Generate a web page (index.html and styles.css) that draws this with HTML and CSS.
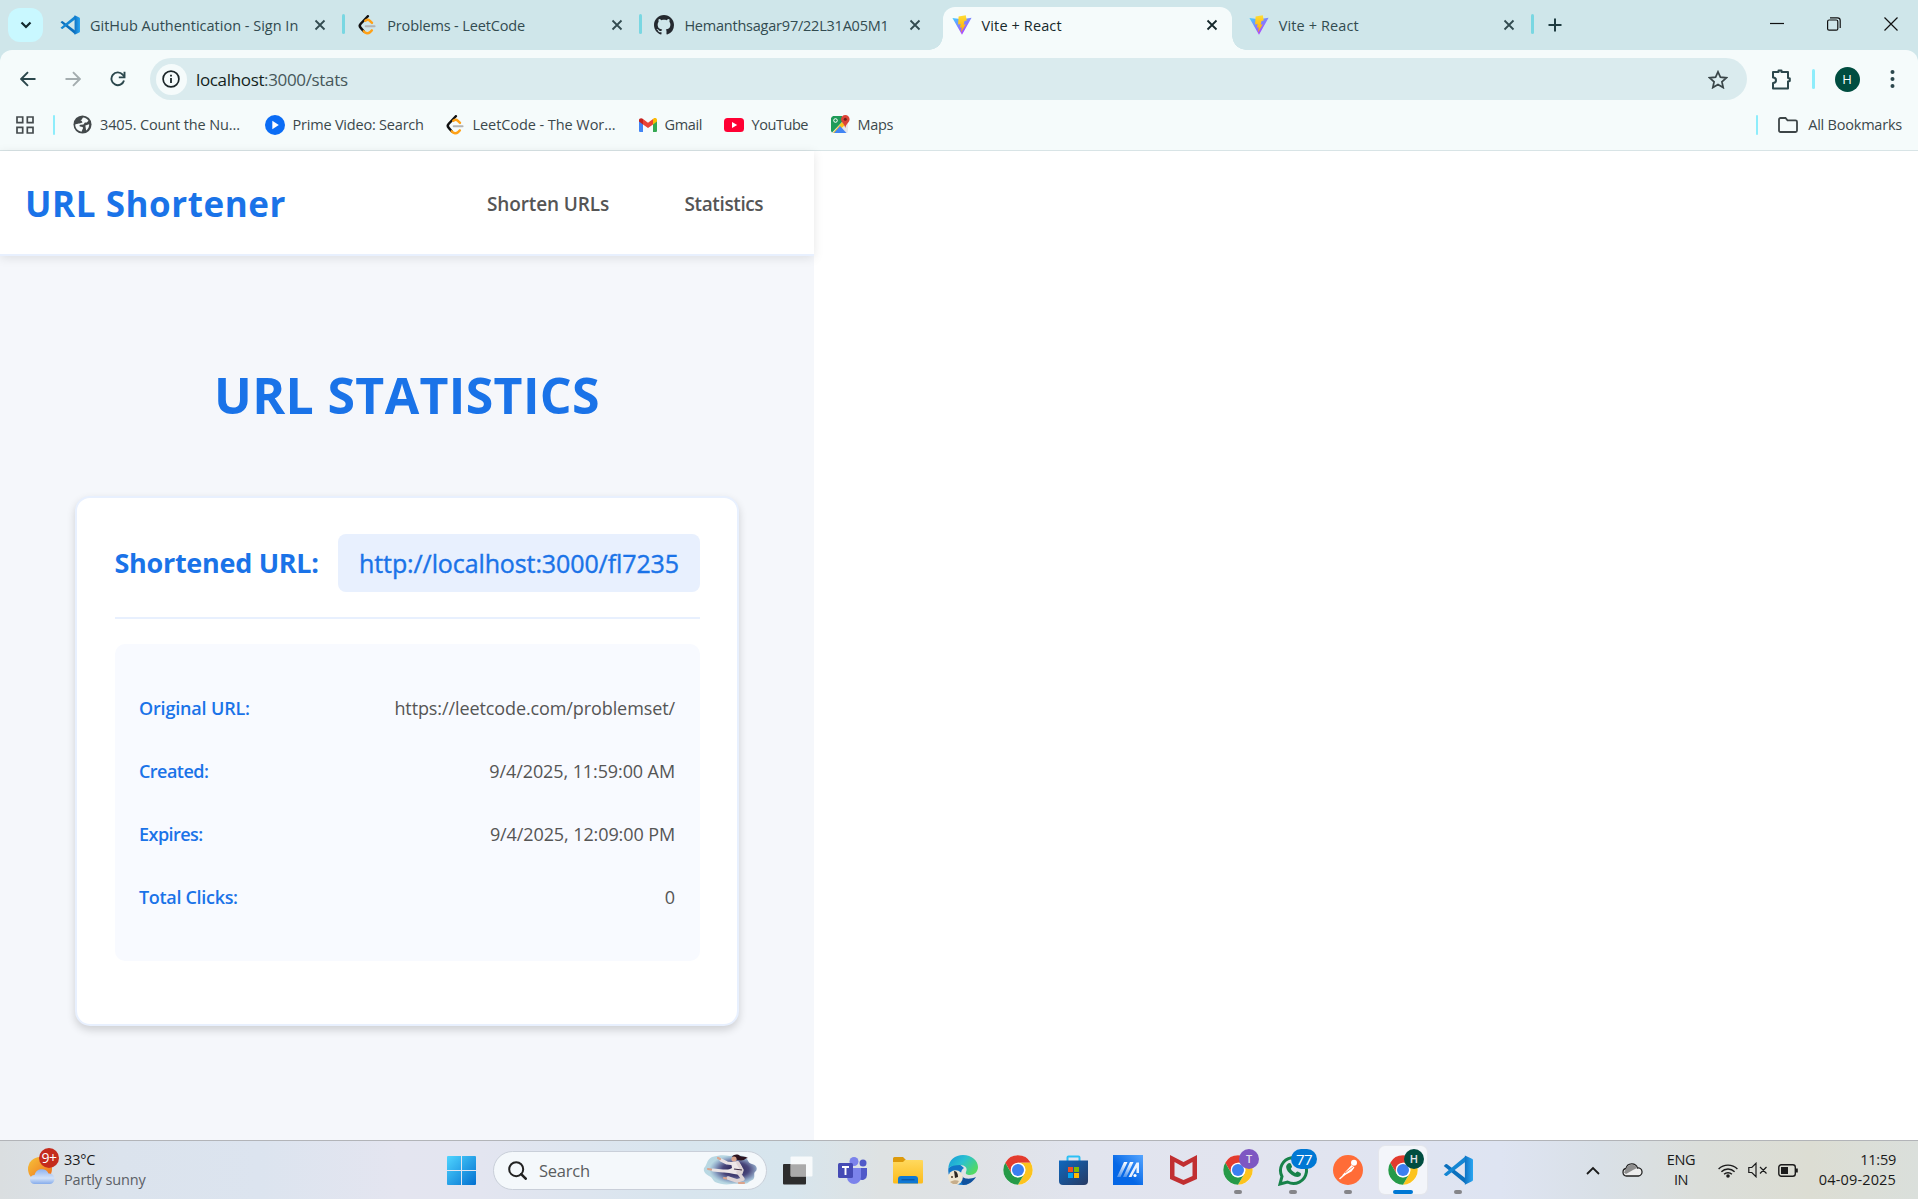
FILE: index.html
```html
<!DOCTYPE html>
<html lang="en">
<head>
<meta charset="utf-8">
<title>Vite + React</title>
<link rel="stylesheet" href="styles.css">
</head>
<body>
<svg class="defs" width="0" height="0" aria-hidden="true">
  <defs>
    <linearGradient id="g-vs" x1="0" x2="1"><stop offset="0" stop-color="#0f73c4"/><stop offset="1" stop-color="#2aa6f2"/></linearGradient>
    <linearGradient id="g-vite" x1="0" y1="0" x2=".7" y2="1"><stop offset="0" stop-color="#41d1ff"/><stop offset="1" stop-color="#bd34fe"/></linearGradient>
    <linearGradient id="g-bolt" x1="0" y1="0" x2="0" y2="1"><stop offset="0" stop-color="#ffdd35"/><stop offset="1" stop-color="#ffa800"/></linearGradient>
    <linearGradient id="g-win" x1="0" y1="0" x2="1" y2="1"><stop offset="0" stop-color="#4fd5ff"/><stop offset="1" stop-color="#0370d0"/></linearGradient>
    <linearGradient id="g-sun" x1="0" y1="0" x2="1" y2="1"><stop offset="0" stop-color="#f5c33a"/><stop offset="1" stop-color="#f0681a"/></linearGradient>
    <linearGradient id="g-cloud" x1="0" y1="0" x2="0" y2="1"><stop offset="0" stop-color="#8fb2ef"/><stop offset=".6" stop-color="#d3e2f8"/><stop offset="1" stop-color="#86aceb"/></linearGradient>
    <linearGradient id="g-folder" x1="0" y1="0" x2="0" y2="1"><stop offset="0" stop-color="#ffd95e"/><stop offset="1" stop-color="#fcbb1b"/></linearGradient>
    <linearGradient id="g-store" x1="0" y1="0" x2="1" y2="1"><stop offset="0" stop-color="#0f68bf"/><stop offset="1" stop-color="#273a63"/></linearGradient>
    <linearGradient id="g-asus" x1="0" y1="1" x2="1" y2="0"><stop offset=".4" stop-color="#0567e6"/><stop offset="1" stop-color="#55a5ff"/></linearGradient>
    <linearGradient id="g-bars" x1="0" y1="1" x2="0" y2="0"><stop offset="0" stop-color="#fff" stop-opacity=".3"/><stop offset="1" stop-color="#fff"/></linearGradient>
    <linearGradient id="g-edge" x1="0" y1="0" x2="1" y2=".6"><stop offset="0" stop-color="#1497dc"/><stop offset=".5" stop-color="#2bc1d0"/><stop offset="1" stop-color="#52d964"/></linearGradient>
    <radialGradient id="g-blob" cx=".6"><stop offset="0" stop-color="#221b4b"/><stop offset=".5" stop-color="#4a477c"/><stop offset=".8" stop-color="#8fa6c6"/><stop offset="1" stop-color="#9fcad8" stop-opacity=".7"/></radialGradient>
    <symbol id="vscode" viewBox="0 0 24 24"><path fill="#0b70bd" d="M.6 8.700 2 7.400a1 1 0 0 1 1.300 0L18 18.600V23z"/><path fill="#1486d3" d="M.6 15.300 2 16.600a1 1 0 0 0 1.300 0L18 5.400V1z"/><path fill="url(#g-vs)" d="M17.500.3 23.200 3c.5.200.8.700.8 1.200v15.600c0 .5-.3 1-.8 1.200l-5.700 2.700z"/></symbol>
    <symbol id="leet" viewBox="0 0 24 24"><path d="M13 1.500 4.500 10.500c-1.500 1.600-1.500 3.500 0 5l3.500 4" fill="none" stroke="#111" stroke-width="3" stroke-linecap="round"/><path d="M8 19.500c2.500 3 5.500 3 7.500 1.200l2.300-2.300M10 7c2-1.500 4-1.500 5.500 0l2.500 2.500" fill="none" stroke="#ffa116" stroke-width="2.900" stroke-linecap="round"/><path d="M10.500 13.500H21" stroke="#b3b3b3" stroke-width="2.600" stroke-linecap="round"/></symbol>
    <symbol id="github" viewBox="0 0 16 16"><path fill="#24292f" d="M8 0C3.580 0 0 3.580 0 8c0 3.540 2.290 6.530 5.470 7.590.4.070.55-.17.55-.38 0-.19-.01-.82-.01-1.490-2.010.37-2.530-.49-2.690-.94-.09-.23-.48-.94-.82-1.130-.28-.15-.68-.52-.01-.53.63-.01 1.080.58 1.230.82.720 1.210 1.870.87 2.330.66.070-.52.280-.87.510-1.070-1.780-.2-3.640-.89-3.640-3.950 0-.87.310-1.590.82-2.150-.08-.2-.36-1.020.08-2.120 0 0 .67-.21 2.200.82.640-.18 1.320-.27 2-.27s1.360.09 2 .27c1.530-1.040 2.200-.82 2.200-.82.440 1.100.16 1.920.08 2.120.51.560.82 1.270.82 2.150 0 3.070-1.870 3.750-3.650 3.950.29.250.54.730.54 1.480 0 1.070-.01 1.930-.01 2.200 0 .21.15.46.55.38A8.010 8.010 0 0 0 16 8c0-4.420-3.580-8-8-8z"/></symbol>
    <symbol id="vite" viewBox="0 0 24 24"><path fill="url(#g-vite)" d="M.5 3.500 12 23.800 23.500 3.300 12 5.200z"/><path fill="url(#g-bolt)" d="m16.500.2-8.600 1.700-.6 9.500 3-.6-.8 4.500 2.200-.5-.9 6.200 5.700-9.900-2.500.5 1-4.300 2.700-.6z"/></symbol>
    <symbol id="x" viewBox="0 0 12 12"><path d="m1.500 1.500 9 9m0-9-9 9" stroke="currentColor" stroke-width="1.800" fill="none"/></symbol>
    <symbol id="chrome" viewBox="0 0 48 48"><circle cx="24" cy="24" r="23.500" fill="#fff"/><path fill="#e33b2e" d="M3.600 12.200 13.800 30 14 18l10-5.700h20.400A23.500 23.500 0 0 0 3.600 12.200z"/><path fill="#fcc31e" d="M44.400 12.300A23.500 23.500 0 0 1 24 47.500l10.200-17.600A11.700 11.700 0 0 0 24 12.300z"/><path fill="#269a48" d="M24 47.500A23.500 23.500 0 0 1 3.600 12.300l10.200 17.600a11.700 11.700 0 0 0 20.400 0z"/><circle cx="24" cy="24" r="11.700" fill="#fff"/><circle cx="24" cy="24" r="9.600" fill="#3c7ff0"/></symbol>
  </defs>
</svg>

<header class="browser">
  <div class="tabstrip">
    <div class="tabsearch"><svg width="12" height="8" viewBox="0 0 12 8"><path d="m1.500 1.500 4.500 4.500 4.500-4.500" fill="none" stroke="#12282c" stroke-width="2.200"/></svg></div>
    <div class="tab sep"><svg class="fav"><use href="#vscode"/></svg><span class="tt">GitHub Authentication - Sign In</span><svg class="close"><use href="#x"/></svg></div>
    <div class="tab sep"><svg class="fav"><use href="#leet"/></svg><span class="tt tight">Problems - LeetCode</span><svg class="close"><use href="#x"/></svg></div>
    <div class="tab"><svg class="fav"><use href="#github"/></svg><span class="tt tighter">Hemanthsagar97/22L31A05M1</span><svg class="close"><use href="#x"/></svg></div>
    <div class="tab active"><svg class="fav"><use href="#vite"/></svg><span class="tt loose">Vite + React</span><svg class="close"><use href="#x"/></svg></div>
    <div class="tab sep"><svg class="fav"><use href="#vite"/></svg><span class="tt loose">Vite + React</span><svg class="close"><use href="#x"/></svg></div>
    <svg class="newtab" width="14" height="14" viewBox="0 0 14 14"><path d="M7 .5v13M.5 7h13" stroke="#1f3c41" stroke-width="2"/></svg>
    <div class="wincontrols">
      <svg width="14" height="14" viewBox="0 0 14 14"><path d="M0 6.500h14" stroke="#111" stroke-width="1.200"/></svg>
      <svg width="14" height="14" viewBox="0 0 14 14" fill="none" stroke="#111" stroke-width="1.200"><rect x=".6" y="3" width="10.200" height="10.200" rx="1.500"/><path d="M3 .8h7.500a2.700 2.700 0 0 1 2.700 2.700V11"/></svg>
      <svg width="14" height="14" viewBox="0 0 14 14"><path d="m.5.500 13 13m0-13-13 13" stroke="#111" stroke-width="1.200"/></svg>
    </div>
  </div>
  <div class="toolbar">
    <svg class="nav" viewBox="0 0 16 16"><path d="M15.500 8H1.500M8 1.200 1.200 8 8 14.800" fill="none" stroke="#2b474c" stroke-width="1.900"/></svg>
    <svg class="nav" viewBox="0 0 16 16"><path d="M.5 8h14M8 1.200 14.800 8 8 14.800" fill="none" stroke="#a4adaf" stroke-width="1.900"/></svg>
    <svg class="nav" viewBox="0 0 16 16"><path d="M14 9.500A6.400 6.400 0 1 1 12.700 3.600L14.500 5.500" fill="none" stroke="#2b474c" stroke-width="1.900"/><path d="M14.500.7v5.700H8.800" fill="none" stroke="#2b474c" stroke-width="1.900"/></svg>
    <div class="omnibox">
      <span class="info"><svg width="18" height="18" viewBox="0 0 18 18"><circle cx="9" cy="9" r="7.900" fill="none" stroke="#1b2628" stroke-width="1.700"/><path d="M9 8v5M9 4.800v1.700" stroke="#1b2628" stroke-width="1.800"/></svg></span>
      <span class="url"><b>localhost</b>:3000/stats</span>
      <svg class="star" width="20" height="19" viewBox="0 0 20 19"><path d="m10 1.800 2.400 5.400 5.900.6-4.400 4 1.300 5.800L10 14.500l-5.200 3.100 1.300-5.800-4.400-4 5.900-.6z" fill="none" stroke="#3a4649" stroke-width="1.700"/></svg>
    </div>
    <svg class="ext" width="21" height="22" viewBox="0 0 21 22"><path d="M2 4h5.500v-1.500h3V4H17v6l1.800.5v2.500L17 13.500V20.500H2v-5.500c4 0 4-5.500 0-5.500z" fill="none" stroke="#2b474c" stroke-width="2" stroke-linejoin="round"/></svg>
    <i class="bar"></i>
    <span class="avatar">H</span>
    <svg class="dots" width="5" height="20" viewBox="0 0 5 20"><g fill="#2b474c"><circle cx="2.500" cy="3" r="2"/><circle cx="2.500" cy="10" r="2"/><circle cx="2.500" cy="17" r="2"/></g></svg>
  </div>
  <nav class="bookmarks">
    <svg width="18" height="18" viewBox="0 0 18 18" fill="none" stroke="#444b4d" stroke-width="1.700"><path d="M1 1h5.700v5.700H1zM11.300 1H17v5.700h-5.700zM1 11.300h5.700V17H1zM11.300 11.300H17V17h-5.700z"/></svg>
    <i class="bar b1"></i>
    <a class="bm m1"><svg width="19" height="19" viewBox="0 0 20 20"><circle cx="10" cy="10" r="9.500" fill="#43494b"/><path fill="#f5fbfb" d="M10.500 2.500c2.500.2 4.500 1.500 5.800 3.500l-1.800 1.800-2 .2-1.500 2-3 .2c-1.500.3-1.500 1.500-.5 2l2.500.3c1 .5.500 2-.2 3l-.8 2c-4-.5-6.700-3.700-6.700-7.500l3-1 2-2.500L9 5z"/><path fill="#43494b" d="m5 5 4 1 1 2-3 1-4 0z"/><path fill="#f5fbfb" d="m13 11 4-1.200c.2 2.500-1 5-3.200 6.500z"/></svg><span>3405. Count the Nu...</span></a>
    <a class="bm m2"><svg width="20" height="20" viewBox="0 0 20 20"><circle cx="10" cy="10" r="10" fill="#0a6cf5"/><path fill="#fff" d="m7.300 5.800 6.500 4.200-6.500 4.200z"/></svg><span>Prime Video: Search</span></a>
    <a class="bm m3"><svg width="20" height="20"><use href="#leet"/></svg><span>LeetCode - The Wor...</span></a>
    <a class="bm m4"><svg width="18" height="14" viewBox="0 0 18 14"><path fill="#4285f4" d="M0 2v11a1 1 0 0 0 1 1h3V5z"/><path fill="#34a853" d="M18 2v11a1 1 0 0 1-1 1h-3V5z"/><path fill="#fbbc04" d="M14 1v5.500l4-3V2c0-2-2.200-2.500-3.500-1.500z"/><path fill="#ea4335" d="M4 1v5.500L9 10l5-3.500V1L9 4.800z"/><path fill="#c5221f" d="M0 2v1.500l4 3V1C2.500-.5 0 .3 0 2z"/></svg><span>Gmail</span></a>
    <a class="bm m5"><svg width="20" height="14" viewBox="0 0 20 14"><rect width="20" height="14" rx="3.500" fill="#f03"/><path fill="#fff" d="m8 4 5.200 3L8 10z"/></svg><span>YouTube</span></a>
    <a class="bm m6"><svg width="19" height="19" viewBox="0 0 19 19"><rect y="1" width="17" height="17" rx="2" fill="#e5e7ea"/><path fill="#1e9b58" d="M2 1h9v6L1 17.500 0 16V3z"/><path fill="#fbc31c" d="m11 7 3 3-9 8H2z"/><path fill="#4285f4" d="m9 11 6.500 7H3z"/><path fill="#db4437" d="M14.300 0a4.300 4.300 0 0 1 4.300 4.300c0 3-3.300 4.200-4.300 8.700-1-4.500-4.300-5.700-4.300-8.700A4.300 4.300 0 0 1 14.300 0z"/><circle cx="14.300" cy="4.300" r="1.500" fill="#6e1f18"/><circle cx="4.500" cy="5.500" r="1.800" fill="none" stroke="#fff"/></svg><span>Maps</span></a>
    <i class="bar b2"></i>
    <a class="bm all"><svg width="20" height="16" viewBox="0 0 20 16"><path d="M1 13.500V2.500A1.500 1.500 0 0 1 2.500 1h5l2 2.300h8A1.500 1.500 0 0 1 19 4.800v8.700a1.500 1.500 0 0 1-1.500 1.500h-15A1.500 1.500 0 0 1 1 13.500z" fill="none" stroke="#3d4547" stroke-width="1.800"/></svg><span>All Bookmarks</span></a>
  </nav>
</header>

<div class="viewport">
  <div class="app">
    <header class="appbar">
      <span class="brand">URL Shortener</span>
      <a class="n1">Shorten URLs</a>
      <a class="n2">Statistics</a>
    </header>
    <h1>URL STATISTICS</h1>
    <section class="card">
      <div class="cardhead"><h2>Shortened URL:</h2><div class="pill"><a>http://localhost:3000/fl7235</a></div></div>
      <dl class="details">
        <div><dt class="d1">Original URL:</dt><dd>https://leetcode.com/problemset/</dd></div>
        <div><dt class="d2">Created:</dt><dd>9/4/2025, 11:59:00 AM</dd></div>
        <div><dt class="d2">Expires:</dt><dd>9/4/2025, 12:09:00 PM</dd></div>
        <div><dt class="d3">Total Clicks:</dt><dd>0</dd></div>
      </dl>
    </section>
  </div>
</div>

<footer class="taskbar">
  <div class="weather">
    <div class="wicon"><svg width="28" height="28" viewBox="0 0 28 28"><circle cx="12" cy="12" r="12" fill="url(#g-sun)"/><path fill="url(#g-cloud)" d="M6.500 27a4.500 4.500 0 0 1 0-9 7.500 7.500 0 0 1 14-1.500A5.300 5.300 0 0 1 22 27z"/></svg><span class="wbadge">9+</span></div>
    <div class="wtext"><span class="temp">33°C</span><span class="cond">Partly sunny</span></div>
  </div>
  <div class="start"><svg width="29" height="29" viewBox="0 0 29 29"><path fill="url(#g-win)" d="M1 0h13v14H0V1a1 1 0 0 1 1-1zM15 0h13a1 1 0 0 1 1 1v13H15zM0 15h14v14H1a1 1 0 0 1-1-1zM15 15h14v13a1 1 0 0 1-1 1H15z"/></svg></div>
  <div class="search">
    <svg width="19" height="19" viewBox="0 0 19 19"><circle cx="8.200" cy="8.200" r="7" fill="none" stroke="#222" stroke-width="2"/><path d="m13.200 13.200 4.500 4.500" stroke="#222" stroke-width="2.600" stroke-linecap="round"/></svg>
    <span>Search</span>
    <svg class="art" width="56" height="32" viewBox="0 0 56 32">
      <path fill="url(#g-blob)" d="M1 14c3-2 2-8 8-11 8-2 12-2 18-1 6-2 14-1 16 2 3 3 2 5 6 6s6 4 4 7c-3 2-1 4-2 7s-4 2-6 5c-6 2-10 0-16 1-7 1-12 0-17-2-3-3-3-5-6-6-3-2-6-4-5-8z"/>
      <path fill="#2d1420" d="M29 3c2-3 6-3 8-1 3 1 5 0 8 2-2 0-3 1-4 2-4 1-6 0-9-1z"/>
      <circle cx="31" cy="5" r="2.600" fill="#dba48c"/>
      <path fill="none" stroke="#eae3e4" stroke-width="3.200" stroke-linecap="round" stroke-linejoin="round" d="m18 6 6 3 8 1M10 16l10 1 13 0"/>
      <path fill="#ede7e8" d="m28 8 7-1 4 6-1 8-7-1-10-2 8-4z"/>
      <path fill="none" stroke="#ded3d5" stroke-width="3.500" stroke-linecap="round" stroke-linejoin="round" d="m35 9 4 7-1 3M35 18l5 7-6 2-9-3"/>
      <path fill="none" stroke="#dba48c" stroke-width="2.200" stroke-linecap="round" d="m15 4 2 1M5 15l3 .5M36 29h5M21 24l2 .3"/>
      <path d="m31 15 8 1" stroke="#3a2940" stroke-width="1.200"/>
    </svg>
  </div>
  <div class="apps">
    <div class="ti"><svg width="30" height="29" viewBox="0 0 30 29"><rect x="0" y="8" width="23" height="20.500" rx="1" fill="#2d2d2d"/><rect x="7.500" y=".5" width="22" height="20" rx="1" fill="#fff" opacity=".8"/><path fill="#aaa" d="M8 8.500h15v12H8z"/></svg></div>
    <div class="ti"><svg width="30" height="27" viewBox="0 0 30 27"><circle cx="16" cy="4.500" r="4.500" fill="#7b83eb"/><circle cx="25" cy="6" r="3.500" fill="#5059c9"/><path fill="#5059c9" d="M19 11h10v7a5 5 0 0 1-8 4z"/><path fill="#7b83eb" d="M9 11h14v9a7 7 0 0 1-14 0z"/><rect y="6" width="15" height="15" rx="1.500" fill="#454bb5"/><path d="M4 10h7M7.500 10v8" stroke="#fff" stroke-width="1.900"/></svg></div>
    <div class="ti"><svg width="30" height="27" viewBox="0 0 30 27"><path fill="#dd9a0b" d="M0 1.500A1.500 1.500 0 0 1 1.500 0H10l3 3-2 3H0z"/><path fill="url(#g-folder)" d="M0 5h10l2-2h17a1 1 0 0 1 1 1v21a1.500 1.500 0 0 1-1.500 1.500h-27A1.500 1.500 0 0 1 0 25z"/><path fill="#0f78d4" d="M5 26.500V22a3 3 0 0 1 3-3h14a3 3 0 0 1 3 3v4.500z"/><path d="M8.500 22.800h13" stroke="#0a4c94"/></svg></div>
    <div class="ti"><svg width="30" height="30" viewBox="0 0 30 30"><path fill="#1276c8" d="M.5 13C-1 22 5 30 15 30c3 0 5-1 6-2-5-1-8-5-8-9 0-3 1-5 3-6L9 7z"/><path fill="url(#g-edge)" d="M.3 13C1 5 7 0 15 0c9 0 15 6 15 12 0 5-4 8-8 8-3 0-5-1-4-3 2-4-1-7-6-7-5 0-9 1-11.700 3z"/><path fill="#10529e" d="M13 19c1 5 8 6 15 3-3 5-8 8-13 8-2-3-3-7-2-11z"/><circle cx="7.500" cy="22.500" r="7.300" fill="#efe6d2"/><path fill="#2b2622" d="M6 16c3 0 4 3 4 6l-3 1z"/><circle cx="4" cy="22" r="1" fill="#4a3a28"/><path fill="#c6ad8a" d="M2 27c3-2 7-2 9-1l-2 3-4 0z"/></svg></div>
    <div class="ti"><svg width="30" height="30"><use href="#chrome"/></svg></div>
    <div class="ti"><svg width="29" height="30" viewBox="0 0 29 30"><path d="M8.500 6V2.500a1 1 0 0 1 1-1h10a1 1 0 0 1 1 1V6" fill="none" stroke="#2cc0f5" stroke-width="2"/><path fill="url(#g-store)" d="M0 5.500h29V26a4 4 0 0 1-4 4H4a4 4 0 0 1-4-4z"/><path fill="#f25022" d="M9 12h5v5H9z"/><path fill="#7fba00" d="M15 12h5v5h-5z"/><path fill="#00a4ef" d="M9 18h5v5H9z"/><path fill="#ffb900" d="M15 18h5v5h-5z"/></svg></div>
    <div class="ti"><svg width="30" height="30" viewBox="0 0 30 30"><path fill="url(#g-asus)" d="M0 0h30v30H0z"/><path fill="url(#g-bars)" d="m4 22 7-15h3.500L7.500 22zM10 22l7-15h3.500l-7 15z"/><path fill="#fff" opacity=".9" d="m15.500 22 8-14.500H26V18h-2.500v-5.500L18.500 22z"/><circle cx="22" cy="20.500" r="1.600" fill="#fff"/></svg></div>
    <div class="ti"><svg width="27" height="30" viewBox="0 0 27 30"><path fill="#c12f31" fill-rule="evenodd" d="m0 0 13.500 7L27 0v24l-13.500 6L0 24zM4.500 7v14l9 4 9-4V7l-9 5z"/></svg></div>
    <div class="ti run"><svg width="30" height="30"><use href="#chrome"/></svg><span class="badge t">T</span></div>
    <div class="ti run"><svg width="31" height="31" viewBox="0 0 31 31"><path d="M2 29l2-7.500A13 13 0 1 1 9.500 27z" fill="none" stroke="#17824a" stroke-width="3"/><path fill="#17824a" d="M10 8.500c1-1 2.500-.7 3 .5l1 2.500c.2.700-1 1.700-1.200 2.200 1 2 2.700 3.400 4.700 4.300.7-.3 1.500-1.700 2.200-1.400l2.800 1.300c1 .6.300 2.700-.7 3.400-2 1.500-5 .7-8-1.200-3-2-5.500-5-5.700-8 0-1.500 1-2.700 1.900-3.600z"/></svg><span class="badge n">77</span></div>
    <div class="ti run"><svg width="30" height="30" viewBox="0 0 30 30"><circle cx="15" cy="15" r="15" fill="#ff6c37"/><path d="m6.500 24 8-7" stroke="#fff" stroke-width="1.500"/><path fill="#fff" d="m9 20.500 9.500-10.500 3 2.500-3 4-7.500 4z"/><circle cx="21" cy="7.800" r="3" fill="#fff"/><path d="m12 18 8-6" stroke="#ff6c37" stroke-width=".8"/></svg></div>
    <div class="ti run on"><svg width="30" height="30"><use href="#chrome"/></svg><span class="badge h">H</span></div>
    <div class="ti run"><svg width="30" height="30"><use href="#vscode"/></svg></div>
  </div>
  <div class="tray">
    <svg class="up" width="14" height="9" viewBox="0 0 14 9"><path d="m1 8 6-6 6 6" fill="none" stroke="#1b1b1b" stroke-width="1.800"/></svg>
    <svg class="cloud" width="21" height="14" viewBox="0 0 21 14"><path d="M4.500 13a3.800 3.800 0 0 1-.5-7.500A6 6 0 0 1 15.500 5a4 4 0 0 1 1 8z" fill="#ededed" stroke="#222" stroke-width="1.300"/><path fill="#8d8d8d" d="M4 6A6 6 0 0 1 15 5l-4 2-7 4-2-1.500z"/></svg>
    <div class="lang"><span>ENG</span><span>IN</span></div>
    <svg class="wifi" width="20" height="15" viewBox="0 0 20 15"><g fill="none" stroke="#1b1b1b" stroke-width="1.400"><path d="M.6 6a13.300 13.300 0 0 1 18.800 0M3.400 8.700a9.400 9.400 0 0 1 13.200 0M6.100 11.300a5.500 5.500 0 0 1 7.800 0"/></g><circle cx="10" cy="13" r="1.800" fill="#1b1b1b"/></svg>
    <svg class="vol" width="20" height="16" viewBox="0 0 20 16"><path d="M.8 5.500h3L8 1.300v13.400l-4.200-4.200h-3zM12 5l6.500 6.500m0-6.500L12 11.500" fill="none" stroke="#1b1b1b" stroke-width="1.200"/></svg>
    <svg class="bat" width="21" height="13" viewBox="0 0 21 13"><rect x=".8" y=".8" width="16.500" height="11.400" rx="2.500" fill="none" stroke="#1b1b1b" stroke-width="1.400"/><rect x="3" y="3" width="7" height="7" fill="#1b1b1b"/><path d="M18.800 4.500v4" stroke="#1b1b1b" stroke-width="2"/></svg>
    <div class="clock"><span class="time">11:59</span><span class="date">04-09-2025</span></div>
  </div>
</footer>
</body>
</html>
```
FILE: styles.css
```css
* { box-sizing: border-box; }
body {
  margin: 0;
  width: 1918px;
  height: 1199px;
  overflow: hidden;
  display: flex;
  flex-direction: column;
  font-family: "Open Sans", "Noto Sans", sans-serif;
  background: #fff;
}
svg { flex: none; display: block; }
span, a, h2, dt, dd { white-space: nowrap; }
.defs { position: absolute; }

/* browser chrome */
.browser { height: 151px; background: #cfe6ea; border-bottom: 1px solid #d8e4e6; flex: none; }
.tabstrip { height: 50px; display: flex; align-items: center; padding-left: 8px; }
.tabsearch { width: 35px; height: 34px; border-radius: 12px; background: #c9f8ff; display: flex; align-items: center; justify-content: center; margin-right: 8px; }
.tab { position: relative; width: 289.200px; height: 43px; margin: 7px 8px 0 0; padding: 0 14px 7px 9px; display: flex; align-items: center; flex: none; font-size: 14.500px; color: #324b50; border-radius: 12px 12px 0 0; }
.tab.sep::after { content: ""; position: absolute; right: -5px; top: 7px; width: 3px; height: 20px; border-radius: 2px; background: #79d7e2; }
.tab.active { background: #f5fbfb; color: #16282b; }
.tab.active::before, .tab.active::after { content: ""; position: absolute; bottom: 0; width: 14px; height: 14px; }
.tab.active::before { left: -14px; background: radial-gradient(circle at 0 0, transparent 13.500px, #f5fbfb 14px); }
.tab.active::after { right: -14px; background: radial-gradient(circle at 100% 0, transparent 13.500px, #f5fbfb 14px); }
.fav { width: 20px; height: 20px; margin-right: 10px; }
.tt { flex: 1; }
.tight { letter-spacing: -.137px; }
.tighter { letter-spacing: -.221px; }
.loose { letter-spacing: .118px; }
.close { width: 12px; height: 12px; }
.newtab { margin-left: 11.500px; }
.wincontrols { margin: -3px 20px 0 auto; display: flex; gap: 43px; }
.toolbar { height: 58px; background: #f5fbfb; border-radius: 12px 12px 0 0; display: flex; align-items: center; padding-left: 19.500px; }
.nav { width: 16px; height: 16px; margin-right: 29px; }
.omnibox { width: 1597px; height: 42px; border-radius: 21px; background: #daebee; margin-left: -4.500px; display: flex; align-items: center; padding: 0 19.500px 0 5.500px; }
.info { width: 31px; height: 31px; border-radius: 50%; background: #f5fbfb; display: flex; align-items: center; justify-content: center; margin-right: 9.500px; }
.url { font-size: 17px; letter-spacing: -.346px; color: #46575a; flex: 1; }
.url b { font-weight: 400; color: #131f21; }
.ext { margin-left: 24px; }
.bar { width: 2.500px; height: 20px; border-radius: 2px; background: #8eedfb; }
.toolbar .bar { margin-left: 20px; }
.avatar { margin-left: 20px; width: 25px; height: 25px; border-radius: 50%; background: #004d40; color: #fff; font-size: 13px; display: flex; align-items: center; justify-content: center; }
.dots { margin-left: 30px; }
.bookmarks { height: 42px; background: #f5fbfb; display: flex; align-items: center; padding: 0 16px 9px 15.500px; font-size: 14.500px; color: #3b484b; }
.bookmarks .b1 { margin-left: 19px; }
.bm { display: flex; align-items: center; }
.bm svg { margin-right: 8px; }
.m1 { margin-left: 18px; letter-spacing: -.127px; }
.m1 span { width: 140px; }
.m2 { margin-left: 24.500px; letter-spacing: -.205px; }
.m2 span { width: 131.500px; }
.m3 { margin-left: 20.500px; letter-spacing: -.067px; }
.m3 span { width: 143px; }
.m4 { margin-left: 23px; letter-spacing: -.34px; }
.m4 span { width: 38px; }
.m5 { margin-left: 21px; letter-spacing: -.438px; }
.m5 span { width: 57px; }
.m6 { margin-left: 22px; letter-spacing: -.297px; }
.all { letter-spacing: -.219px; }
.all svg { margin-right: 10px; }
.bookmarks .b2 { margin: 0 20px 0 auto; }

/* page */
.viewport { flex: 1; display: flex; background: #fff; min-height: 0; }
.app { width: 814px; background: #f5f7fb; flex: none; }
.appbar { height: 105px; background: #fff; border-bottom: 2px solid #e8f0fe; box-shadow: 0 2px 10px rgba(0,0,0,.1); display: flex; align-items: center; padding: 2px 0 0 25px; }
.brand { font-size: 35px; font-weight: 700; letter-spacing: .55px; color: #1a73e8; width: 462px; }
.appbar a { font-size: 19px; font-weight: 600; color: #555; }
.n1 { width: 197.500px; letter-spacing: -.12px; }
.n2 { letter-spacing: -.38px; }
h1 { margin: 105px 0 66px; height: 69px; line-height: 69px; text-align: center; font-size: 50px; font-weight: 700; letter-spacing: .35px; color: #1a73e8; }
.card { margin: 0 75px; height: 530px; border: 2px solid #e8f0fe; border-radius: 15px; background: #fff; padding: 36px 37px 0 37.500px; box-shadow: 0 4px 8px rgba(0,0,0,.16); }
.cardhead { height: 85px; display: flex; justify-content: space-between; align-items: flex-start; border-bottom: 2px solid #e8f0fe; }
h2 { margin: 0; line-height: 58px; font-size: 27px; font-weight: 700; letter-spacing: -.29px; color: #1a73e8; }
.pill { width: 362px; height: 58px; line-height: 58px; border-radius: 8px; background: #e8f0fe; text-align: center; font-size: 25px; letter-spacing: -.107px; -webkit-text-stroke: .4px #1a73e8; color: #1a73e8; }
.details { margin: 25px 0 0; height: 317px; padding: 32px 25px 32px 24.500px; background: #f8faff; border-radius: 10px; font-size: 18px; }
.details div { height: 63px; display: flex; justify-content: space-between; align-items: center; }
dt { font-weight: 600; color: #1a73e8; }
.d1 { letter-spacing: -.176px; }
.d2 { letter-spacing: -.54px; }
.d3 { letter-spacing: -.316px; }
dd { margin: 0; color: #555; letter-spacing: -.1px; }

/* taskbar */
.taskbar { height: 59px; flex: none; border-top: 1px solid #b2b4b8; display: flex; align-items: center; background: linear-gradient(90deg, #dadee0 0, #dbe3ed 120px, #dce4ef 260px, #e4e5f0 400px, #e3e5f0 480px, #d8e5ee 680px, #d7e5ed 790px, #dee2e3 880px, #dfe2e5 960px, #e1e4ee 1080px, #e2e4ef 1250px, #dee4f2 1500px, #d9e0e7 1600px, #dbdeda 1700px, #dcddd3 1810px, #dadfdb 1918px); }
.weather { width: 447px; display: flex; padding-left: 28px; }
.wicon { position: relative; width: 36px; padding-top: 7px; }
.wbadge { position: absolute; left: 11px; top: -2px; width: 20px; height: 20px; line-height: 19px; border-radius: 50%; background: #c42b1c; color: #fff; font-size: 14px; text-align: center; letter-spacing: -.5px; }
.wtext { display: flex; flex-direction: column; font-size: 14.500px; line-height: 20px; letter-spacing: -.15px; color: #1a1a1a; }
.cond { color: #5b6066; }
.start { width: 46px; }
.search { width: 274px; height: 39px; border-radius: 20px; background: #f4f8fb; border: 1px solid #c9cfd9; display: flex; align-items: center; padding: 0 7px 0 14px; font-size: 16.500px; letter-spacing: -.25px; color: #5a5d60; }
.search span { margin-left: 12px; flex: 1; }
.apps .ti { position: relative; width: 48px; height: 48px; display: flex; align-items: center; justify-content: center; border-radius: 6px; }
.apps { display: flex; gap: 7px; margin-left: 7px; }
.ti.on { background: #f3f5fa; box-shadow: 0 0 0 1px #e4e6ec; }
.ti.run::after { content: ""; position: absolute; left: 20px; bottom: 0; width: 8px; height: 4px; border-radius: 2px; background: #858589; }
.ti.run.on::after { left: 14px; width: 20px; background: #0078d4; }
.badge { position: absolute; border-radius: 10px; color: #e4e4ea; text-align: center; width: 20px; height: 20px; line-height: 20px; font-size: 11px; left: 25px; top: 3px; font-weight: 600; }
.t { background: #7e57c2; }
.h { background: #004d40; }
.n { background: #0078d4; color: #fff; width: 26px; left: 22px; font-size: 15px; letter-spacing: -.5px; font-weight: 400; }
.tray { margin-left: auto; display: flex; align-items: center; padding-right: 22px; font-size: 14.500px; line-height: 20px; color: #1a1a1a; }
.cloud { margin-left: 22px; }
.lang { margin-left: 20px; width: 36px; display: flex; flex-direction: column; align-items: center; letter-spacing: -.4px; }
.wifi { margin-left: 19px; }
.vol { margin-left: 10px; }
.bat { margin-left: 10px; }
.clock { width: 97px; display: flex; flex-direction: column; align-items: flex-end; }
.time { letter-spacing: -.246px; }
.date { letter-spacing: .148px; }
```
